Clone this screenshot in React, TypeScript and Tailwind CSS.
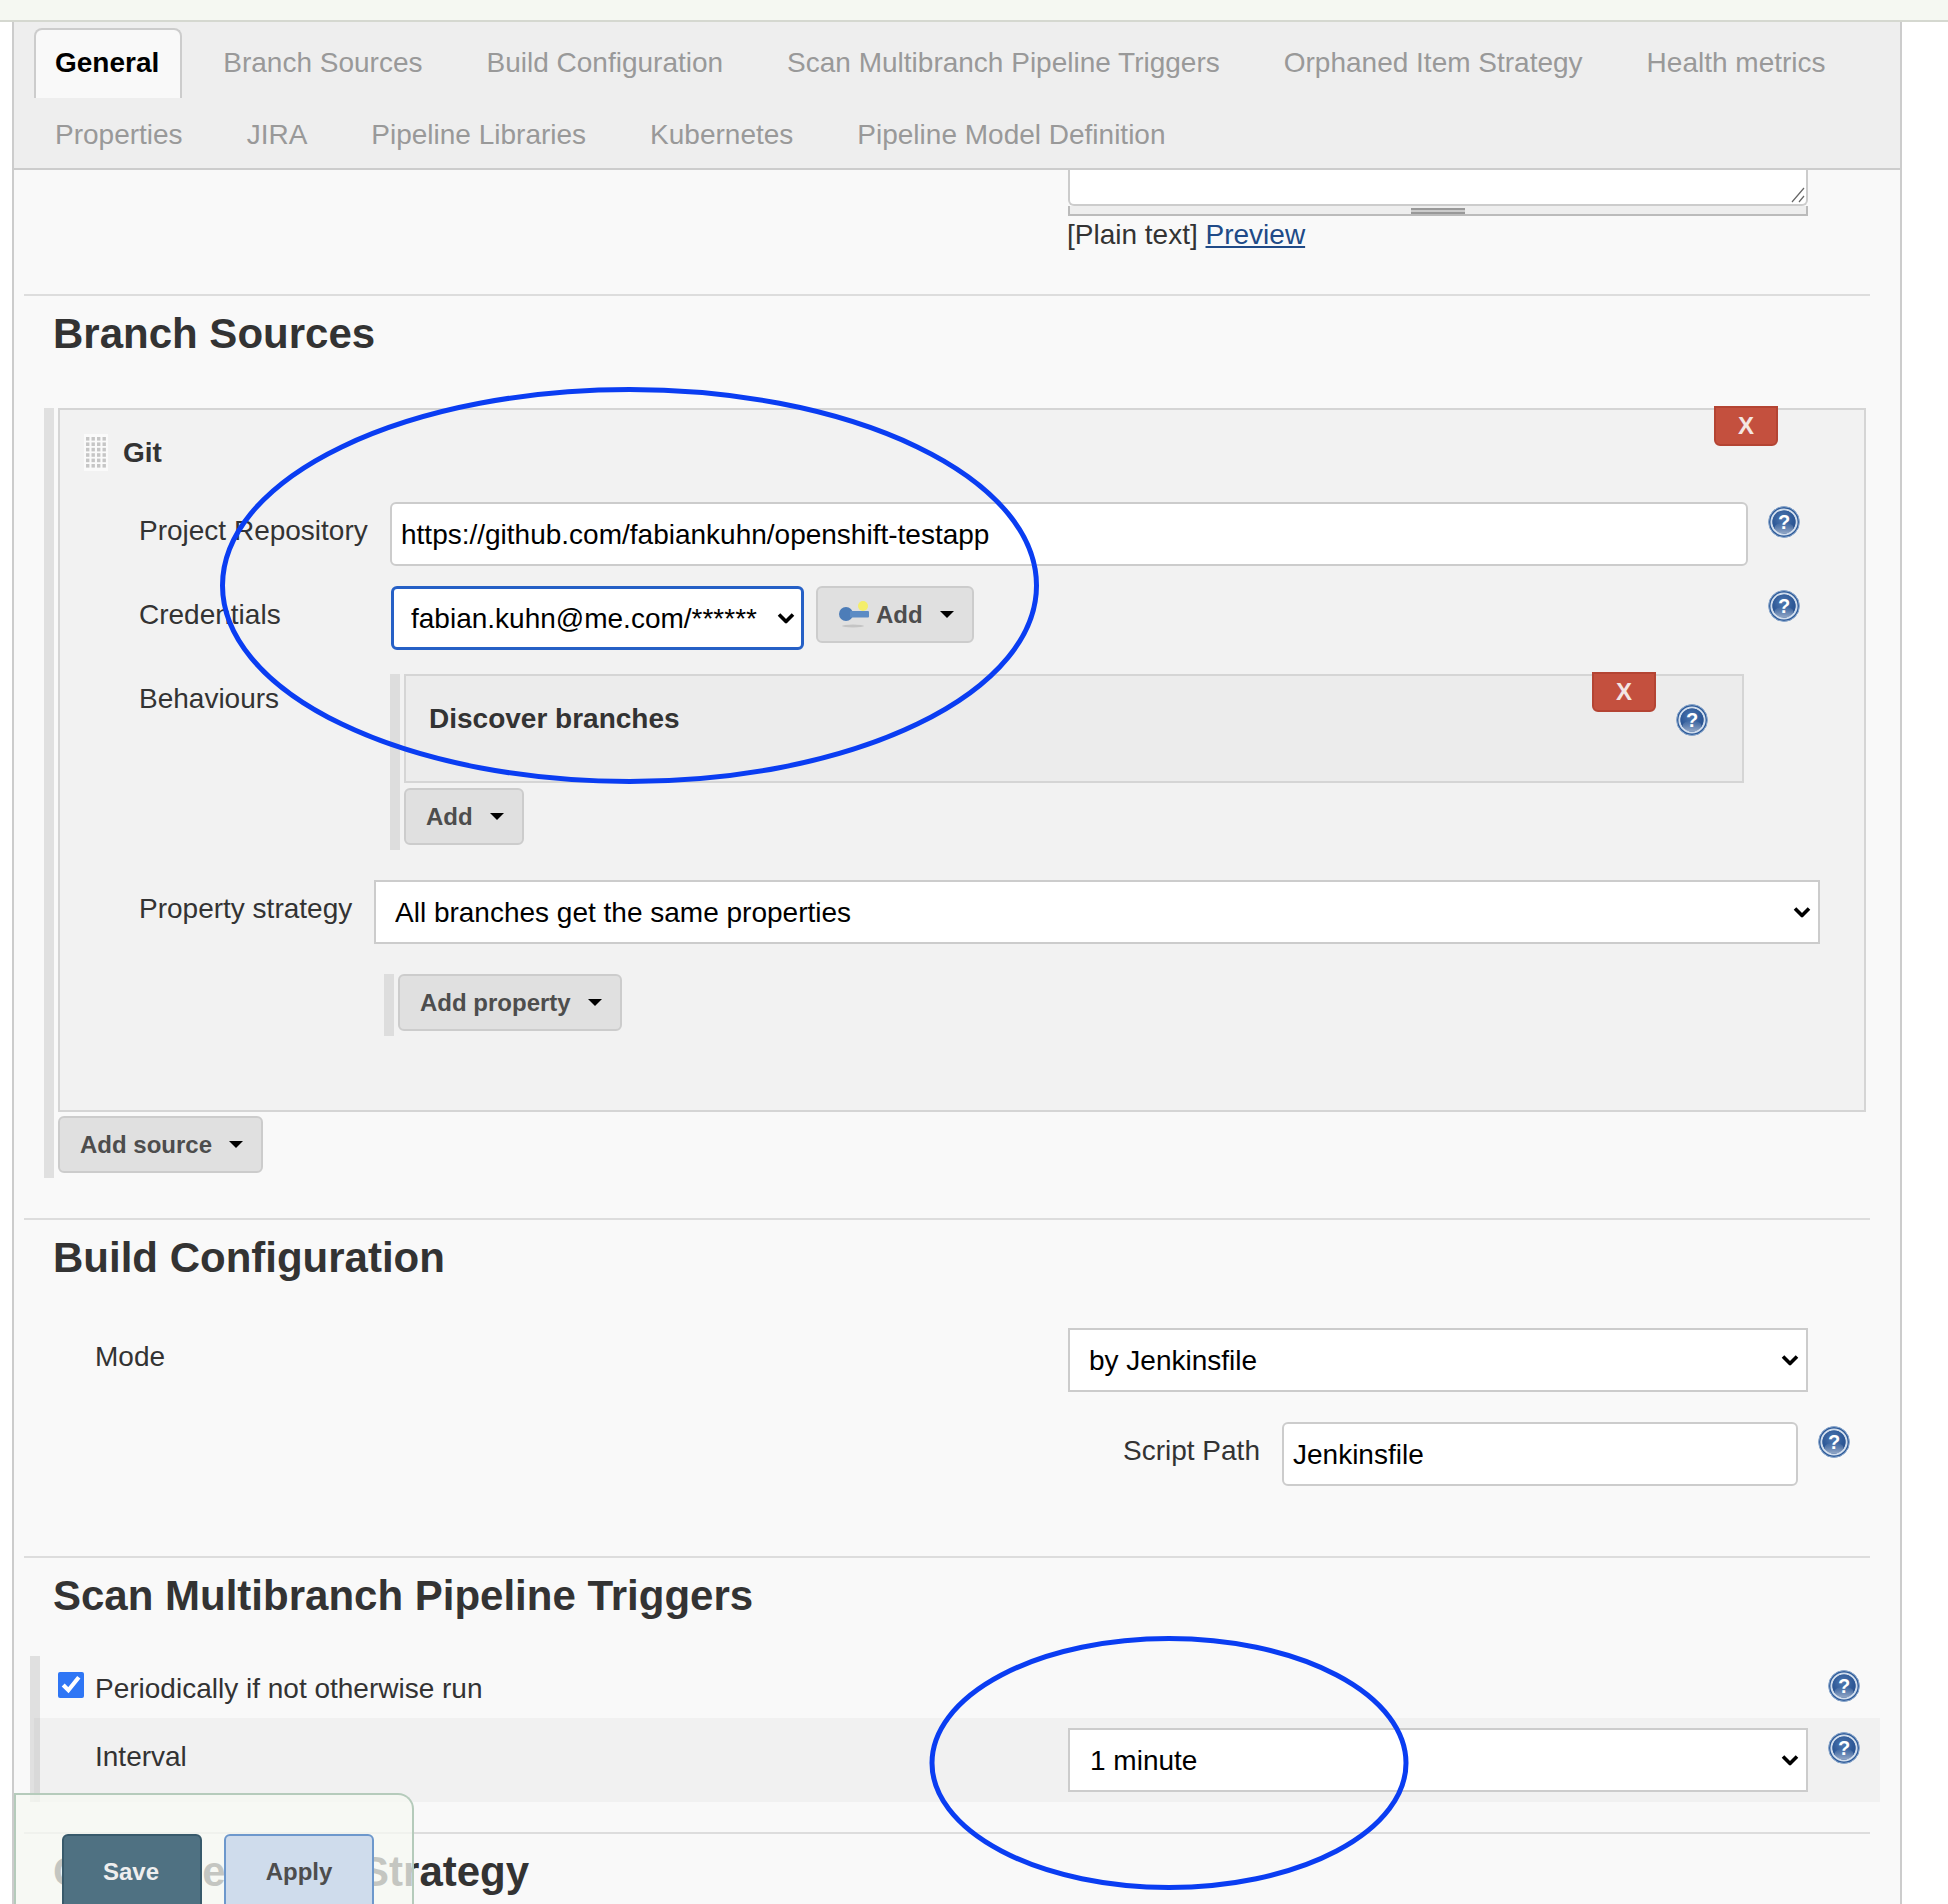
import React from "react";

function Help({ className = "" }: { className?: string }) {
  return (
    <svg viewBox="0 0 32 32" className={"w-[32px] h-[32px] shrink-0 " + className}>
      <defs>
        <radialGradient id="hg" cx="0.45" cy="0.35" r="0.8">
          <stop offset="0" stopColor="#4f78b0" />
          <stop offset="0.55" stopColor="#2f5a98" />
          <stop offset="1" stopColor="#224a88" />
        </radialGradient>
        <linearGradient id="hs" x1="0" y1="0" x2="0" y2="1">
          <stop offset="0" stopColor="#ffffff" stopOpacity="0" />
          <stop offset="1" stopColor="#ffffff" stopOpacity="0.5" />
        </linearGradient>
      </defs>
      <circle cx="16" cy="16" r="15.4" fill="#2d5a98" stroke="#88a6cc" strokeWidth="1" />
      <circle cx="16" cy="16" r="12.6" fill="none" stroke="#d2deed" strokeWidth="2" />
      <circle cx="16" cy="16" r="11.4" fill="url(#hg)" />
      <ellipse cx="16" cy="22" rx="9.5" ry="5.5" fill="url(#hs)" />
      <text x="16" y="23" textAnchor="middle" fontFamily="'Liberation Sans', sans-serif" fontWeight="700" fontSize="20" fill="#ffffff">?</text>
    </svg>
  );
}

function Caret() {
  return <span className="w-0 h-0 border-x-[7px] border-x-transparent border-t-[7px] border-t-black shrink-0" />;
}

function DropBtn({ label, icon }: { label: string; icon?: boolean }) {
  return (
    <button className="flex items-center h-[57px] px-[20px] bg-[#e0e0e0] border-2 border-[#ccc] rounded-[6px] text-[24px] font-bold text-[#4d4d4d] shrink-0">
      {icon && <Key />}
      <span>{label}</span>
      <span className="ml-[17px] mr-[-2px] flex"><Caret /></span>
    </button>
  );
}

function Key() {
  return (
    <svg viewBox="0 0 32 30" className="w-[32px] h-[30px] mr-[6px] shrink-0">
      <defs>
        <filter id="kb" x="-30%" y="-30%" width="160%" height="160%"><feGaussianBlur stdDeviation="0.7" /></filter>
      </defs>
      <ellipse cx="15" cy="26" rx="11" ry="1.5" fill="#c4c4c4" filter="url(#kb)" />
      <circle cx="25" cy="6" r="5" fill="#f4ee6a" filter="url(#kb)" />
      <g filter="url(#kb)">
        <circle cx="8" cy="14" r="7" fill="#4d7db8" />
        <rect x="12" y="11" width="19" height="6.5" rx="1" fill="#5c8bc4" />
      </g>
    </svg>
  );
}

function XBtn({ className = "" }: { className?: string }) {
  return (
    <button className={"absolute w-[64px] h-[40px] bg-[#c4503e] border-2 border-[#b44433] rounded-b-[6px] text-[24px] font-bold text-[#f3e6e3] flex items-center justify-center " + className}>
      X
    </button>
  );
}

function Hr({ className = "" }: { className?: string }) {
  return <div className={"ml-[10px] w-[1846px] h-[2px] bg-[#ddd] " + className} />;
}

function Heading({ text, className = "" }: { text: string; className?: string }) {
  return <h2 className={"ml-[39px] text-[42px] leading-[48px] font-bold text-[#333] " + className}>{text}</h2>;
}

function Select({ value, className = "", selectClass = "" }: { value: string; className?: string; selectClass?: string }) {
  return (
    <div className={"relative shrink-0 " + className}>
      <select defaultValue={value} className={"block w-full h-full appearance-none bg-white border-2 border-[#ccc] pt-[2px] text-[28px] text-black outline-none " + selectClass}>
        <option value={value}>{value}</option>
      </select>
      <svg viewBox="0 0 18 11" className="absolute right-[9px] top-1/2 -translate-y-1/2 w-[18px] h-[11px] pointer-events-none">
        <path d="M2 2 L9 9 L16 2" fill="none" stroke="#000" strokeWidth="3.6" />
      </svg>
    </div>
  );
}

const row1 = ["Branch Sources", "Build Configuration", "Scan Multibranch Pipeline Triggers", "Orphaned Item Strategy", "Health metrics"];
const row2 = ["Properties", "JIRA", "Pipeline Libraries", "Kubernetes", "Pipeline Model Definition"];

function Tab({ label, active }: { label: string; active?: boolean }) {
  return (
    <div
      className={
        "h-[70px] pt-[15px] border-x-2 border-t-2 leading-[36px] rounded-t-[8px] text-[28px] whitespace-nowrap " +
        (active ? "pl-[19px] pr-[21px] mr-[19px] bg-[#f9f9f9] border-[#ccc] text-black font-bold" : "px-[20px] mr-[20px] border-transparent text-[#999]")
      }
    >
      {label}
    </div>
  );
}

export default function App() {
  return (
    <div className="relative w-[1948px] h-[1904px] overflow-hidden bg-white font-['Liberation_Sans',Arial,sans-serif] text-[#333] text-[28px] leading-[36px]">
      <div className="h-[22px] bg-[#f5f8f2] border-b-2 border-[#d5d8d0]" />
      <main className="ml-[12px] w-[1890px] h-[1882px] border-x-2 border-[#ccc] bg-[#f9f9f9]">
        <div className="h-[148px] bg-[#eee] border-b-2 border-[#ccc] pt-[6px] pl-[20px]">
          <div className="flex">
            <Tab label="General" active />
            {row1.map((t) => <Tab key={t} label={t} />)}
          </div>
          <div className="flex mt-[2px] -ml-px">
            {row2.map((t) => <Tab key={t} label={t} />)}
          </div>
        </div>

        <div className="ml-[1054px] w-[740px]">
          <div className="relative h-[36px] bg-white border-x-2 border-b-2 border-[#ccc] rounded-b-[6px]">
            <svg viewBox="0 0 14 16" className="absolute right-[1px] bottom-[1px] w-[14px] h-[16px]">
              <path d="M1 15 L13 1 M8 15 L13 9" stroke="#666" strokeWidth="1.2" fill="none" />
            </svg>
          </div>
          <div className="h-[10px] bg-[#eee] border-x-2 border-b-2 border-[#bbb] flex justify-center pt-[2px]">
            <div className="w-[54px] h-[6px] border-y-2 border-[#999] bg-[#ccc]" />
          </div>
          <div className="pt-[1px] -ml-px">
            [Plain text] <a href="#" className="text-[#204a87] underline">Preview</a>
          </div>
        </div>

        <Hr className="mt-[41px]" />
        <Heading text="Branch Sources" className="mt-[14px]" />

        <div className="mt-[50px] ml-[30px] w-[1822px] border-l-[10px] border-[#e0e0e0] pl-[4px] pb-[5px]">
          <div className="relative h-[704px] bg-[#f2f2f2] border-2 border-[#d5d5d5]">
            <XBtn className="left-[1654px] top-[-4px]" />

            <div className="flex items-center ml-[24px] mt-[24px] h-[37px] gap-[15px] font-bold">
              <svg viewBox="0 0 24 37" className="w-[24px] h-[37px] shrink-0">
                <rect width="24" height="37" fill="#fafafa" />
                {[0, 1, 2, 3, 4, 5].flatMap((r) =>
                  [0, 1, 2, 3].map((c) => <rect key={r + "-" + c} x={2 + c * 5.5} y={3 + r * 5.4} width="3.4" height="3.6" fill="#c6c6c6" />)
                )}
              </svg>
              <span>Git</span>
            </div>

            <div className="flex mt-[31px] ml-[79px]">
              <label className="w-[251px] pt-[11px] shrink-0">Project Repository</label>
              <input
                defaultValue="https://github.com/fabiankuhn/openshift-testapp"
                className="w-[1358px] h-[64px] bg-white border-2 border-[#ccc] rounded-[6px] px-[9px] pt-[2px] text-[28px] text-black shrink-0 outline-none"
              />
              <Help className="ml-[20px] mt-[4px]" />
            </div>

            <div className="flex mt-[20px] ml-[79px]">
              <label className="w-[252px] pt-[11px] shrink-0">Credentials</label>
              <Select value="fabian.kuhn@me.com/******" className="w-[413px] h-[64px]" selectClass="pl-[17px] !border-[3.5px] !border-[#2660c6] rounded-[6px]" />
              <div className="ml-[12px]"><DropBtn label="Add" icon /></div>
              <Help className="ml-[794px] mt-[4px]" />
            </div>

            <div className="flex mt-[24px] ml-[79px]">
              <label className="w-[251px] pt-[7px] shrink-0">Behaviours</label>
              <div className="border-l-[10px] border-[#ddd] pl-[4px] h-[176px]">
                <div className="relative w-[1340px] h-[109px] bg-[#ececec] border-2 border-[#d5d5d5] pl-[23px] pt-[25px] font-bold">
                  Discover branches
                  <XBtn className="left-[1186px] top-[-4px]" />
                  <Help className="absolute left-[1270px] top-[28px]" />
                </div>
                <div className="mt-[5px] w-fit"><DropBtn label="Add" /></div>
              </div>
            </div>

            <div className="flex mt-[30px] ml-[79px]">
              <label className="w-[235px] pt-[11px] shrink-0">Property strategy</label>
              <Select value="All branches get the same properties" className="w-[1446px] h-[64px]" selectClass="pl-[19px]" />
            </div>

            <div className="mt-[30px] ml-[324px] w-fit border-l-[10px] border-[#ddd] pl-[4px] h-[62px]">
              <DropBtn label="Add property" />
            </div>
          </div>
          <div className="mt-[4px] w-fit"><DropBtn label="Add source" /></div>
        </div>

        <Hr className="mt-[40px]" />
        <Heading text="Build Configuration" className="mt-[14px]" />

        <div className="flex mt-[46px] ml-[81px]">
          <label className="w-[973px] pt-[11px] shrink-0">Mode</label>
          <Select value="by Jenkinsfile" className="w-[740px] h-[64px]" selectClass="pl-[19px]" />
        </div>
        <div className="flex mt-[30px] ml-[1109px]">
          <label className="w-[159px] pt-[11px] shrink-0">Script Path</label>
          <input
            defaultValue="Jenkinsfile"
            className="w-[516px] h-[64px] bg-white border-2 border-[#ccc] rounded-[6px] px-[9px] pt-[2px] text-[28px] text-black shrink-0 outline-none"
          />
          <Help className="ml-[20px] mt-[4px]" />
        </div>

        <Hr className="mt-[70px]" />
        <Heading text="Scan Multibranch Pipeline Triggers" className="mt-[14px]" />

        <div className="mt-[36px] ml-[16px] w-[1839px] border-l-[10px] border-[#e0e0e0]">
          <div className="flex items-start h-[62px] pl-[18px]">
            <input type="checkbox" defaultChecked className="w-[26px] h-[26px] mt-[16px] m-0 accent-[#2f76f5] shrink-0" />
            <span className="ml-[11px] pt-[15px]">Periodically if not otherwise run</span>
            <Help className="ml-auto mt-[14px] mr-[9px]" />
          </div>
          <div className="flex h-[84px] w-[1846px] ml-[-6px] bg-black/[0.03] pl-[61px] pt-[10px]">
            <label className="w-[973px] pt-[11px] shrink-0">Interval</label>
            <Select value="1 minute" className="w-[740px] h-[64px]" selectClass="pl-[20px]" />
            <Help className="ml-[20px] mt-[4px]" />
          </div>
        </div>

        <Hr className="mt-[30px]" />
        <Heading text="Orphaned Item Strategy" className="mt-[14px]" />
      </main>

      <div className="absolute left-[14px] top-[1793px] w-[400px] h-[111px] bg-[#f5f8f2]/75 border-x-2 border-t-2 border-[#b5cbbb] rounded-tr-[16px] flex gap-[22px] pl-[46px] pt-[39px]">
        <button className="w-[140px] h-[90px] bg-[#4f7182] border-2 border-[#385a6b] rounded-[6px] text-[24px] font-bold text-[#eee] pb-[14px] pr-[2px]">Save</button>
        <button className="w-[150px] h-[90px] bg-[#cfdcec] border-2 border-[#6d98cc] rounded-[6px] text-[24px] font-bold text-[#4d4d4d] pb-[14px]">Apply</button>
      </div>

      <svg className="absolute left-0 top-0 w-[1948px] h-[1904px] pointer-events-none" viewBox="0 0 1948 1904" fill="none" stroke="#0a3df2" strokeWidth="5">
        <ellipse cx="629.5" cy="585.5" rx="407" ry="196" />
        <ellipse cx="1169" cy="1763" rx="237" ry="124.5" />
      </svg>
    </div>
  );
}
